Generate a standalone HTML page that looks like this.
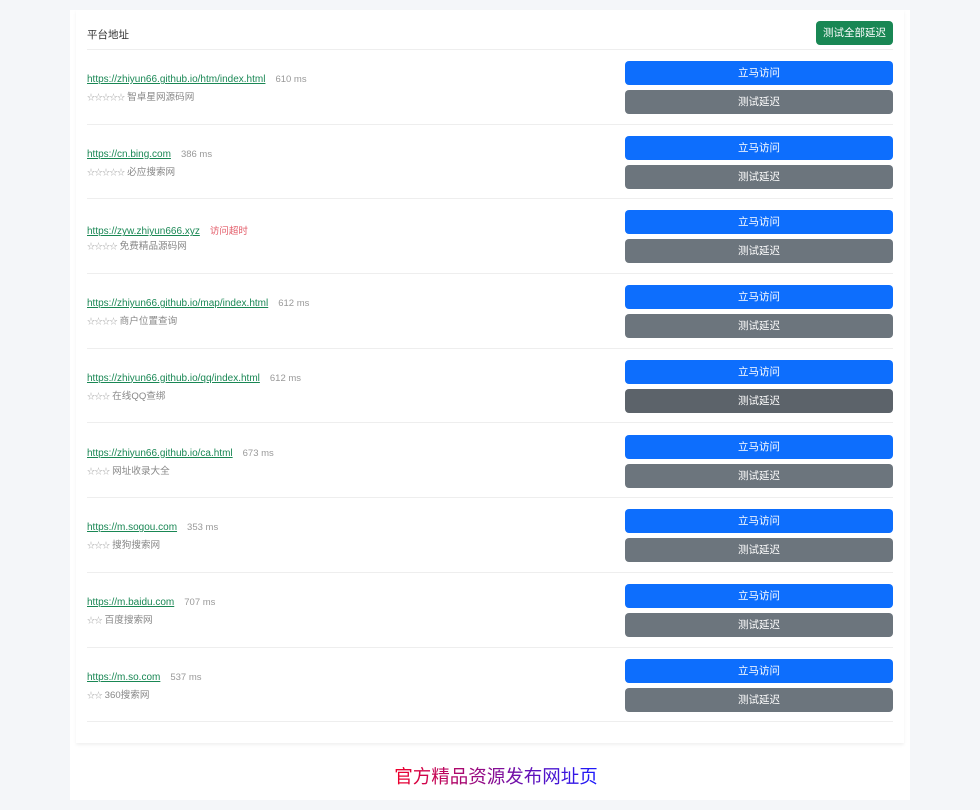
<!DOCTYPE html>
<html><head><meta charset="utf-8"><style>
*{box-sizing:border-box;margin:0;padding:0}
body{width:980px;height:810px;background:#f4f6f9;font-family:"Liberation Sans","Noto Sans CJK SC",sans-serif;position:relative;overflow:hidden}
.wrap{position:absolute;left:70px;top:10px;width:840px;height:790px;background:#fff}
.card{position:absolute;left:6px;top:0;width:828px;height:733px;background:#fff;box-shadow:0 2px 3px rgba(0,0,0,.06)}
.hdr{position:absolute;left:11px;top:0;width:806px;height:40px;border-bottom:1px solid #eee;font-size:10.5px;color:#333}
.hdr span{position:absolute;left:0;top:17px}
.all{position:absolute;right:0;top:11px;width:77px;height:24px;background:#198754;color:#fff;border-radius:4px;font-size:10.5px;text-align:center;line-height:24px}
.row{position:absolute;left:11px;width:806px;height:74.7px;border-bottom:1px solid #eee}
.l{position:absolute;left:0;top:24px;font-size:10px;color:#198754;white-space:nowrap}
.l u{text-decoration:underline}
.ms{color:#999;margin-left:10px;font-size:9.5px}
.to{color:#e35d6a}
.d{position:absolute;left:0;top:39px;font-size:9.6px;color:#888;white-space:nowrap}
.d s{text-decoration:none;font-size:8px;color:#aaa;letter-spacing:-0.5px}
.b{position:absolute;left:538px;width:268px;height:24px;border-radius:4px;color:#fff;font-size:10.5px;text-align:center;line-height:24px}
.b1{top:11px;background:#0d6efd}
.b2{top:40px;background:#6c757d}
.foot{position:absolute;left:6px;width:840px;top:753px;text-align:center;font-size:18.5px}
.foot span{background:linear-gradient(90deg,#f0002a,#1a1aff);-webkit-background-clip:text;background-clip:text;color:transparent}
</style></head><body>
<div class="wrap">
<div class="card">
<div class="hdr"><span>平台地址</span><div class="all">测试全部延迟</div></div>
<div class="row" style="top:40px"><div class="l"><u>https://zhiyun66.github.io/htm/index.html</u><span class="ms">610 ms</span></div><div class="d"><s>☆☆☆☆☆</s> 智卓星网源码网</div><div class="b b1">立马访问</div><div class="b b2">测试延迟</div></div>
<div class="row" style="top:114.7px"><div class="l"><u>https://cn.bing.com</u><span class="ms">386 ms</span></div><div class="d"><s>☆☆☆☆☆</s> 必应搜索网</div><div class="b b1">立马访问</div><div class="b b2">测试延迟</div></div>
<div class="row" style="top:189.4px"><div class="l"><u>https://zyw.zhiyun666.xyz</u><span class="ms to">访问超时</span></div><div class="d"><s>☆☆☆☆</s> 免费精品源码网</div><div class="b b1">立马访问</div><div class="b b2">测试延迟</div></div>
<div class="row" style="top:264.1px"><div class="l"><u>https://zhiyun66.github.io/map/index.html</u><span class="ms">612 ms</span></div><div class="d"><s>☆☆☆☆</s> 商户位置查询</div><div class="b b1">立马访问</div><div class="b b2">测试延迟</div></div>
<div class="row" style="top:338.8px"><div class="l"><u>https://zhiyun66.github.io/qq/index.html</u><span class="ms">612 ms</span></div><div class="d"><s>☆☆☆</s> 在线QQ查绑</div><div class="b b1">立马访问</div><div class="b b2" style="background:#5c636a">测试延迟</div></div>
<div class="row" style="top:413.5px"><div class="l"><u>https://zhiyun66.github.io/ca.html</u><span class="ms">673 ms</span></div><div class="d"><s>☆☆☆</s> 网址收录大全</div><div class="b b1">立马访问</div><div class="b b2">测试延迟</div></div>
<div class="row" style="top:488.2px"><div class="l"><u>https://m.sogou.com</u><span class="ms">353 ms</span></div><div class="d"><s>☆☆☆</s> 搜狗搜索网</div><div class="b b1">立马访问</div><div class="b b2">测试延迟</div></div>
<div class="row" style="top:562.9px"><div class="l"><u>https://m.baidu.com</u><span class="ms">707 ms</span></div><div class="d"><s>☆☆</s> 百度搜索网</div><div class="b b1">立马访问</div><div class="b b2">测试延迟</div></div>
<div class="row" style="top:637.6px"><div class="l"><u>https://m.so.com</u><span class="ms">537 ms</span></div><div class="d"><s>☆☆</s> 360搜索网</div><div class="b b1">立马访问</div><div class="b b2">测试延迟</div></div>
</div>
<div class="foot"><span>官方精品资源发布网址页</span></div>
</div>
</body></html>
